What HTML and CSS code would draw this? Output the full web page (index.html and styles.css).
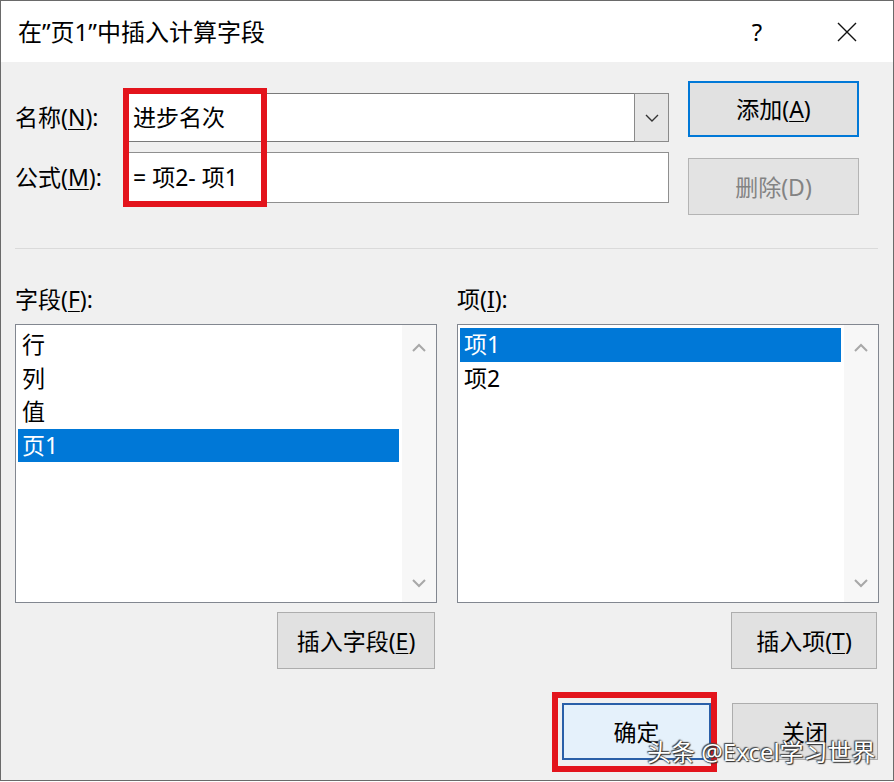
FILE: index.html
```html
<!DOCTYPE html>
<html lang="zh-CN">
<head>
  <meta charset="UTF-8" />
  <title>插入计算字段</title>
  <link rel="stylesheet" href="styles.css">
</head>
<body>

<div class="window">
  <div class="titlebar">
    <div class="title">在”页1”中插入计算字段</div>
    <div class="help">?</div>
    <div class="close">
      <svg width="20" height="20" viewBox="0 0 20 20"><path d="M1 1 L19 19 M19 1 L1 19" stroke="#111" stroke-width="1.4" fill="none"/></svg>
    </div>
  </div>

  <div class="fields">
    <label class="lbl lbl-name">名称(<u>N</u>):</label>
    <div class="combo">
      <span class="value">进步名次</span>
      <span class="drop">
        <svg width="14" height="8" viewBox="0 0 14 8"><path d="M1 1 L7 7 L13 1" stroke="#333" stroke-width="1.4" fill="none"/></svg>
      </span>
    </div>
    <button class="btn btn-default">添加(<u>A</u>)</button>

    <label class="lbl lbl-formula">公式(<u>M</u>):</label>
    <div class="text-input"><span class="value">= 项2- 项1</span></div>
    <button class="btn btn-disabled">删除(D)</button>

    <div class="mark mark-inputs"></div>
  </div>

  <div class="divider"></div>

  <div class="lists">
    <div class="list-col">
      <div class="list-label">字段(<u>F</u>):</div>
      <div class="listbox">
        <ul class="items">
          <li>行</li>
          <li>列</li>
          <li>值</li>
          <li class="selected">页1</li>
        </ul>
        <div class="scroll">
          <svg width="14" height="9" viewBox="0 0 14 9"><path d="M1 8 L7 2 L13 8" stroke="#a8a8a8" stroke-width="2" fill="none"/></svg>
          <svg width="14" height="9" viewBox="0 0 14 9"><path d="M1 1 L7 7 L13 1" stroke="#a8a8a8" stroke-width="2" fill="none"/></svg>
        </div>
      </div>
      <button class="btn btn-insert btn-insert-field">插入字段(<u>E</u>)</button>
    </div>

    <div class="list-col">
      <div class="list-label">项(<u>I</u>):</div>
      <div class="listbox">
        <ul class="items">
          <li class="selected">项1</li>
          <li>项2</li>
        </ul>
        <div class="scroll">
          <svg width="14" height="9" viewBox="0 0 14 9"><path d="M1 8 L7 2 L13 8" stroke="#a8a8a8" stroke-width="2" fill="none"/></svg>
          <svg width="14" height="9" viewBox="0 0 14 9"><path d="M1 1 L7 7 L13 1" stroke="#a8a8a8" stroke-width="2" fill="none"/></svg>
        </div>
      </div>
      <button class="btn btn-insert btn-insert-item">插入项(<u>T</u>)</button>
    </div>
  </div>

  <div class="actions">
    <button class="btn btn-ok">确定</button>
    <button class="btn btn-close">关闭</button>
    <div class="mark mark-ok"></div>
  </div>

  <div class="watermark">头条 @Excel学习世界</div>
</div>

</body>
</html>
```

FILE: styles.css
```css
* {
  box-sizing: border-box;
}

html, body {
  margin: 0;
  padding: 0;
}

body {
  width: 894px;
  height: 782px;
  overflow: hidden;
  background: #ffffff;
}

.window {
  position: relative;
  width: 894px;
  height: 781px;
  border: 1px solid #6a6a6a;
  background: #f0f0f0;
  font-family: "Noto Sans", "Noto Sans CJK SC", sans-serif;
  font-size: 23px;
  color: #000;
}

u {
  text-decoration-thickness: 1px;
  text-underline-offset: 3px;
}

/* title bar */
.titlebar {
  height: 61px;
  background: #fff;
  display: flex;
  align-items: center;
  padding-left: 17px;
}

.title {
  flex: 1;
  font-size: 24px;
  line-height: 61px;
}

.help {
  width: 40px;
  text-align: center;
  font-size: 24px;
  line-height: 61px;
}

.close {
  width: 46px;
  margin: 0 23px 0 47px;
  display: flex;
  justify-content: center;
}

/* name / formula */
.fields {
  position: relative;
  display: grid;
  grid-template-columns: 92px 543px 171px;
  column-gap: 19px;
  row-gap: 10px;
  align-items: start;
  padding: 19px 0 0 14px;
}

.lbl {
  display: block;
  white-space: nowrap;
}

.lbl-name {
  margin-top: 12px;
  line-height: 49px;
}

.lbl-formula {
  line-height: 51px;
}

.combo {
  margin-top: 12px;
  height: 49px;
  display: flex;
  background: #fff;
  border: 1px solid #7a7a7a;
}

.value {
  flex: 1;
  padding-left: 6px;
  line-height: 46px;
  white-space: pre;
}

.drop {
  width: 35px;
  margin: -1px -1px -1px 0;
  border: 1px solid #8a8a8a;
  background: #e6e6e6;
  display: flex;
  align-items: center;
  justify-content: center;
}

.text-input {
  height: 51px;
  display: flex;
  background: #fff;
  border: 1px solid #8f8f8f;
}

.text-input .value {
  line-height: 48px;
}

.btn {
  font-family: inherit;
  font-size: 23px;
  color: #000;
  background: #e1e1e1;
  border: 1px solid #adadad;
  padding: 0;
  height: 57px;
  line-height: 52px;
  text-align: center;
}

.btn-default {
  height: 56px;
  border: 2px solid #0078d7;
}

.btn-disabled {
  margin-top: 6px;
  color: #838383;
  background: #e3e3e3;
  border-color: #b4b4b4;
}

.divider {
  height: 1px;
  margin: 33px 15px 0 14px;
  background: #dadada;
}

/* field / item lists */
.lists {
  display: grid;
  grid-template-columns: 422px 422px;
  column-gap: 20px;
  padding: 0 14px 0 14px;
}

.list-col {
  display: flex;
  flex-direction: column;
}

.list-label {
  margin-top: 35px;
  line-height: 30px;
}

.listbox {
  margin-top: 10px;
  height: 279px;
  display: flex;
  background: #fff;
  border: 1px solid #828790;
}

.items {
  flex: 1;
  list-style: none;
  margin: 0;
  padding: 3px 3px 0 2px;
}

.items li {
  height: 33.5px;
  line-height: 33.5px;
  padding-left: 4px;
}

.items li.selected {
  background: #0078d7;
  color: #fff;
}

.scroll {
  width: 34px;
  background: #f7f7f7;
  display: flex;
  flex-direction: column;
  justify-content: space-between;
  align-items: center;
  padding: 18px 0 14px;
}

.btn-insert {
  margin-top: 9px;
  align-self: flex-end;
  margin-right: 2px;
}

.btn-insert-field {
  width: 158px;
}

.btn-insert-item {
  width: 146px;
}

/* bottom buttons */
.actions {
  position: relative;
  display: flex;
  justify-content: flex-end;
  gap: 21px;
  margin-top: 34px;
  padding-right: 15px;
}

.btn-ok {
  width: 149px;
  background: #e5f1fb;
  border: 2px solid #2a5fa8;
}

.btn-close {
  width: 146px;
}

/* red annotation frames */
.mark {
  position: absolute;
  border: 6px solid #e3141c;
  pointer-events: none;
}

.mark-inputs {
  left: 122px;
  top: 26px;
  width: 144px;
  height: 119px;
}

.mark-ok {
  left: 551px;
  top: -11px;
  width: 165px;
  height: 80px;
}

.watermark {
  position: absolute;
  left: 646px;
  top: 735px;
  font-size: 24px;
  line-height: 32px;
  color: #fff;
  white-space: nowrap;
  text-shadow: 0 0 2px #222, 1px 1px 1px #333, -1px -1px 1px #555;
}
```
